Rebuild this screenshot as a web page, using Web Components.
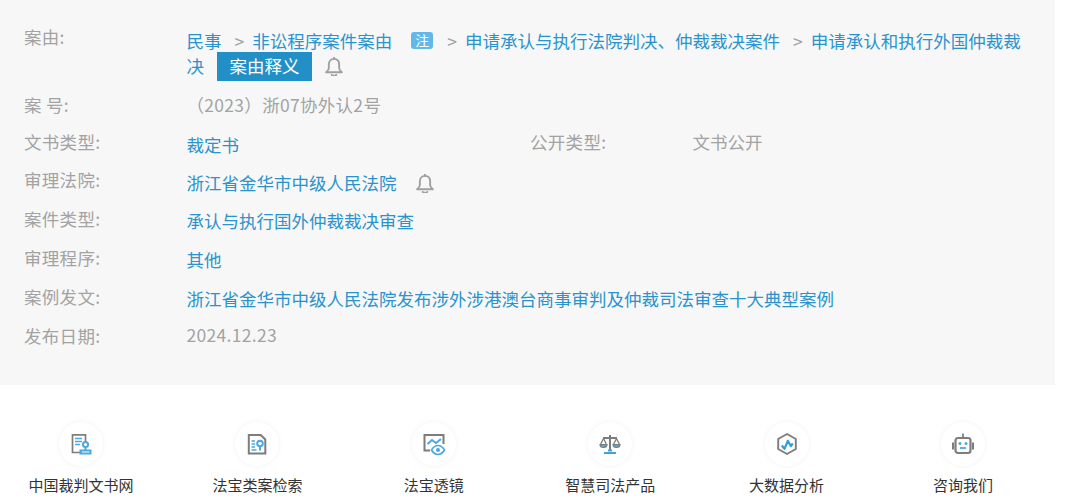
<!DOCTYPE html>
<html lang="zh-CN">
<head>
<meta charset="utf-8">
<title>案例</title>
<style>
  html, body { margin: 0; height: 500px; overflow: hidden; background: #fff; }
  body { font-family: "Noto Sans CJK SC", "Liberation Sans", sans-serif; }
  a { color: #2a93cc; text-decoration: none; }
  .num { letter-spacing: .3px; }
</style>
</head>
<body>

<template id="case-panel-tpl">
  <style>
    :host {
      display: block;
      width: 1055px;
      height: 385px;
      box-sizing: border-box;
      padding: 23px 24px 0;
      background: #f7f7f7;
    }
  </style>
  <slot></slot>
</template>

<template id="case-row-tpl">
  <style>
    :host { display: grid; grid-template-columns: 162.500px 1fr; min-height: 39px; color: #a3a3a3; }
    :host([half]) { width: 506px; }
    .label { font-size: 17.500px; letter-spacing: .3px; line-height: 28px; white-space: pre; }
    .value { font-size: 17.500px; line-height: 25px; padding-top: var(--value-top, 3px); color: #a3a3a3; }
  </style>
  <div class="label"><slot name="label"></slot></div>
  <div class="value"><slot></slot></div>
</template>

<template id="row-pair-tpl">
  <style>
    :host { display: flex; height: 38px; }
  </style>
  <slot></slot>
</template>

<template id="bell-icon-tpl">
  <style>
    :host { display: inline-block; width: 18px; height: 19px; vertical-align: -3px; margin-left: var(--bell-gap, 13px); }
    svg { display: block; }
  </style>
  <svg width="18" height="19" viewBox="1 .5 16 17" fill="none" stroke="#a0a0a0" stroke-width="1.700" stroke-linejoin="round" stroke-linecap="round">
    <path d="M9 2.200c-3 0-4.600 2.200-4.600 5v3.200c0 1.600-1 2.600-2.400 3.800h14c-1.400-1.200-2.400-2.200-2.400-3.800V7.200c0-2.800-1.600-5-4.600-5z"/>
    <path d="M9 1v1.200M7 16.500c.5 1 3.500 1 4 0"/>
  </svg>
</template>

<template id="note-badge-tpl">
  <style>
    :host {
      display: inline-block;
      width: 22px;
      height: 17px;
      margin: 0 14px 0 19px;
      border-radius: 3px;
      background: #63b8e8;
      color: #fff;
      font-size: 14px;
      line-height: 17px;
      text-align: center;
      vertical-align: 2px;
    }
  </style>
  <slot></slot>
</template>

<template id="reason-btn-tpl">
  <style>
    :host {
      display: inline-block;
      width: 95px;
      height: 29px;
      margin: -3px 0 -3px 13px;
      background: #2290c6;
      color: #fff;
      font-size: 17.500px;
      line-height: 27px;
      text-align: center;
    }
  </style>
  <slot></slot>
</template>

<template id="foot-bar-tpl">
  <style>
    :host {
      display: flex;
      justify-content: space-between;
      width: 986px;
      margin-left: 29px;
      padding-top: 37px;
    }
  </style>
  <slot></slot>
</template>

<template id="foot-link-tpl">
  <style>
    :host {
      display: flex;
      flex-direction: column;
      align-items: center;
      width: 104px;
      color: #333;
      font-size: 15px;
      line-height: 22px;
      white-space: nowrap;
    }
    .circle {
      display: flex;
      align-items: center;
      justify-content: center;
      width: 44px;
      height: 44px;
      margin-bottom: 8px;
      border-radius: 50%;
      background: #fff;
      box-shadow: 0 0 5px rgba(0, 0, 0, .06);
    }
  </style>
  <div class="circle"><slot name="icon"></slot></div>
  <slot></slot>
</template>

<case-panel>
  <case-row style="--value-top:5px; min-height:68px">
    <span slot="label">案由:</span>
    <a href="#">民事</a><span style="margin:0 8px 0 13px">&gt;</span><a href="#">非讼程序案件案由</a><note-badge>注</note-badge><span style="margin-right:8px">&gt;</span><a href="#">申请承认与执行法院判决、仲裁裁决案件</a><span style="margin:0 8px 0 13px">&gt;</span><a href="#">申请承认和执行外国仲裁裁决</a><reason-btn>案由释义</reason-btn><bell-icon></bell-icon>
  </case-row>
  <case-row style="--value-top:.500px; min-height:37px">
    <span slot="label">案 号:</span>
    <span class="num">（2023）浙07协外认2号</span>
  </case-row>
  <row-pair>
    <case-row half style="--value-top:4px">
      <span slot="label">文书类型:</span>
      <a href="#">裁定书</a>
    </case-row>
    <case-row style="--value-top:1px">
      <span slot="label">公开类型:</span>
      文书公开
    </case-row>
  </row-pair>
  <case-row style="--value-top:4px">
    <span slot="label">审理法院:</span>
    <a href="#">浙江省金华市中级人民法院</a><bell-icon style="--bell-gap:19px"></bell-icon>
  </case-row>
  <case-row>
    <span slot="label">案件类型:</span>
    <a href="#">承认与执行国外仲裁裁决审查</a>
  </case-row>
  <case-row>
    <span slot="label">审理程序:</span>
    <a href="#">其他</a>
  </case-row>
  <case-row>
    <span slot="label">案例发文:</span>
    <a href="#">浙江省金华市中级人民法院发布涉外涉港澳台商事审判及仲裁司法审查十大典型案例</a>
  </case-row>
  <case-row style="--value-top:0px">
    <span slot="label">发布日期:</span>
    <span class="num">2024.12.23</span>
  </case-row>
</case-panel>

<foot-bar>
  <foot-link>
    <svg slot="icon" width="24" height="24" viewBox="0 0 24 24" fill="none">
      <path d="M13 20.500H3.500V2.800h13V10" stroke="#7d7d7d" stroke-width="1.700"/>
      <path d="M6 6.500h7M6 9.500h7M6 12.500h5" stroke="#4ba9de" stroke-width="1.700"/>
      <circle cx="16.500" cy="12.500" r="2.600" stroke="#4ba9de" stroke-width="2"/>
      <path d="M16.500 15v2.500M11.500 18.500h10v3h-10z" stroke="#4ba9de" stroke-width="2"/>
    </svg>
    中国裁判文书网
  </foot-link>
  <foot-link>
    <svg slot="icon" width="24" height="24" viewBox="0 0 24 24" fill="none">
      <path d="M3.800 3h12l4.500 4.500v14H3.800z" stroke="#7d7d7d" stroke-width="2"/>
      <path d="M6.500 9h3.500M6.500 12h3.500M6.500 15h3.500M6.500 18h5" stroke="#4ba9de" stroke-width="1.600"/>
      <circle cx="15" cy="11.500" r="2.800" stroke="#4ba9de" stroke-width="2"/>
      <path d="M15 14.500v4" stroke="#4ba9de" stroke-width="2"/>
    </svg>
    法宝类案检索
  </foot-link>
  <foot-link>
    <svg slot="icon" width="24" height="24" viewBox="0 0 24 24" fill="none">
      <path d="M8 18.500H2.500V3h19v9" stroke="#7d7d7d" stroke-width="2"/>
      <path d="M5.500 12l4.500-4 4 3 5-4" stroke="#4ba9de" stroke-width="2"/>
      <path d="M9.500 18c2-3.300 4.300-4.500 6.500-4.500s4.500 1.200 6.500 4.500c-2 3.300-4.300 4.500-6.500 4.500S11.500 21.300 9.500 18z" stroke="#4ba9de" stroke-width="1.700"/>
      <circle cx="16" cy="18" r="2" fill="#4ba9de"/>
    </svg>
    法宝透镜
  </foot-link>
  <foot-link>
    <svg slot="icon" width="24" height="24" viewBox="0 0 24 24" fill="none">
      <path d="M5 6h14M12 3v15" stroke="#7d7d7d" stroke-width="2"/>
      <path d="M5.500 6.500L2.500 12.500M5.500 6.500l3 6M18.500 6.500l-3 6M18.500 6.500l3 6" stroke="#7d7d7d" stroke-width="1.300"/>
      <path d="M2 12.500h7c0 4-7 4-7 0zM15 12.500h7c0 4-7 4-7 0z" fill="#4ba9de" stroke="#7d7d7d" stroke-width="1.200"/>
      <path d="M6 21h12" stroke="#3fa3dc" stroke-width="2"/>
      <path d="M10 18.500h4" stroke="#3fa3dc" stroke-width="2"/>
    </svg>
    智慧司法产品
  </foot-link>
  <foot-link>
    <svg slot="icon" width="24" height="24" viewBox="0 0 24 24" fill="none">
      <path d="M12 2l8.800 5v10L12 22l-8.800-5V7z" stroke="#7d7d7d" stroke-width="1.900"/>
      <path d="M6.800 13.500l2.700 3.300 3.300-8 3 5.200 2-2.500" stroke="#2f9fdc" stroke-width="2.200" stroke-linejoin="round"/>
    </svg>
    大数据分析
  </foot-link>
  <foot-link>
    <svg slot="icon" width="24" height="24" viewBox="0 0 24 24" fill="none">
      <path d="M12 1.500v4.500" stroke="#7d7d7d" stroke-width="1.800"/>
      <rect x="4.500" y="6" width="15" height="15" rx="2.500" stroke="#7d7d7d" stroke-width="2.200"/>
      <path d="M2 10.500v7M22 10.500v7" stroke="#7d7d7d" stroke-width="2"/>
      <circle cx="9" cy="11.500" r="1.500" fill="#4ba9de"/>
      <circle cx="15" cy="11.500" r="1.500" fill="#4ba9de"/>
      <path d="M9 16h6" stroke="#4ba9de" stroke-width="1.800"/>
    </svg>
    咨询我们
  </foot-link>
</foot-bar>

<script>
  // every element here only differs by its template, so register them in a loop
  const names = ['case-panel', 'case-row', 'row-pair', 'bell-icon', 'note-badge', 'reason-btn', 'foot-bar', 'foot-link'];

  names.forEach((name) => {
    const template = document.getElementById(name + '-tpl');
    customElements.define(name, class extends HTMLElement {
      constructor() {
        super();
        const root = this.attachShadow({mode: 'open'});
        root.appendChild(template.content.cloneNode(true));
      }
    });
  });
</script>
</body>
</html>
